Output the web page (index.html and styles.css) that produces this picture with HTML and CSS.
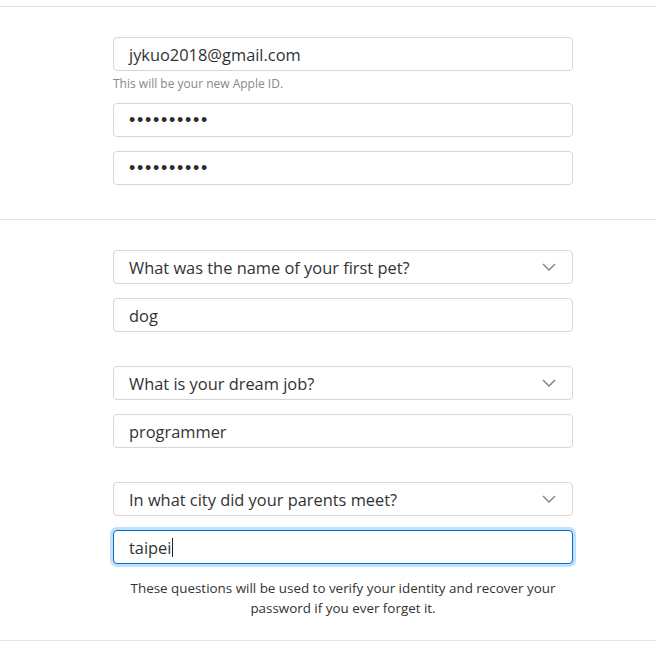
FILE: index.html
```html
<!DOCTYPE html>
<html>
<head>
<meta charset="utf-8">
<link rel="stylesheet" href="styles.css">
</head>
<body>
<div class="page">
  <section class="section account">
    <div class="column">
      <div class="field"><span class="value">jykuo2018@gmail.com</span></div>
      <div class="hint">This will be your new Apple ID.</div>
      <div class="field pw"><span class="dots">••••••••••</span></div>
      <div class="field pw second"><span class="dots">••••••••••</span></div>
    </div>
  </section>
  <section class="section questions">
    <div class="column">
      <div class="group">
        <div class="field select"><span class="value">What was the name of your first pet?</span>
          <svg class="chev" width="14" height="8" viewBox="0 0 14 8"><polyline points="1,1 7,7 13,1" fill="none" stroke="#8a8a8a" stroke-width="1.6"/></svg>
        </div>
        <div class="field answer"><span class="value">dog</span></div>
      </div>
      <div class="group">
        <div class="field select"><span class="value">What is your dream job?</span>
          <svg class="chev" width="14" height="8" viewBox="0 0 14 8"><polyline points="1,1 7,7 13,1" fill="none" stroke="#8a8a8a" stroke-width="1.6"/></svg>
        </div>
        <div class="field answer"><span class="value">programmer</span></div>
      </div>
      <div class="group">
        <div class="field select"><span class="value">In what city did your parents meet?</span>
          <svg class="chev" width="14" height="8" viewBox="0 0 14 8"><polyline points="1,1 7,7 13,1" fill="none" stroke="#8a8a8a" stroke-width="1.6"/></svg>
        </div>
        <div class="field answer focused"><span class="value">taipei</span><span class="caret"></span></div>
      </div>
      <p class="note">These questions will be used to verify your identity and recover your password if you ever forget it.</p>
    </div>
  </section>
</div>
</body>
</html>
```
FILE: styles.css
```css
* { box-sizing: border-box; }
html, body { margin: 0; padding: 0; background: #fff; }
body {
  font-family: "Open Sans", "Noto Sans", "Liberation Sans", sans-serif;
  color: #333;
}
.page { padding-top: 6px; }
.section {
  border-top: 1px solid #e5e5e5;
}
.account { padding: 30px 0 34px; }
.questions { padding: 30px 0 0; border-bottom: 1px solid #e5e5e5; }
.column {
  width: 460px;
  margin-left: 113px;
}
.field {
  height: 34px;
  border: 1px solid #d6d6d6;
  border-radius: 4px;
  display: flex;
  align-items: center;
  padding: 0 15px;
  font-size: 16.4px;
  color: #333;
  background: #fff;
}
.value { white-space: nowrap; }
.hint {
  font-size: 12px;
  color: #888;
  line-height: 16px;
  margin: 5px 0 11px;
}
.pw .dots {
  font-size: 18px;
  letter-spacing: 1.7px;
  color: #2b2b2b;
  font-family: "Liberation Sans", sans-serif;
  line-height: 1;
}
.pw.second { margin-top: 14px; }
.group { margin-bottom: 34px; }
.group:last-of-type { margin-bottom: 0; }
.select { justify-content: space-between; }
.chev { margin-right: 1px; }
.answer { margin-top: 14px; }
.focused {
  border-color: #0070c9;
  box-shadow: 0 0 0 3px rgba(131, 192, 253, 0.5);
}
.caret {
  display: inline-block;
  width: 1px;
  height: 19px;
  background: #222;
  margin-left: 1px;
}
.note {
  margin: 14px 0 0;
  padding-bottom: 22px;
  text-align: center;
  font-size: 13.4px;
  line-height: 20px;
  color: #333;
}
```
